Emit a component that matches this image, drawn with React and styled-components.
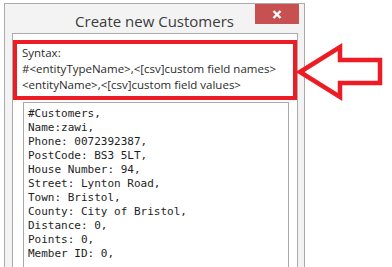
import styled, { createGlobalStyle } from 'styled-components'

const Global = createGlobalStyle`
  html, body { margin: 0; padding: 0; background: #ffffff; }
  body { width: 392px; height: 267px; overflow: hidden; position: relative; }
`

const Page = styled.div`
  position: relative;
  width: 392px;
  height: 267px;
  padding: 3px 0 0 4px;
  box-sizing: border-box;
  overflow: hidden;
`

const Window = styled.div`
  width: 301px;
  height: 264px;
  box-sizing: border-box;
  border: 1px solid #ababab;
  border-bottom: none;
  background: #f3f3f3;
  display: flex;
  flex-direction: column;
`

const TitleBar = styled.div`
  height: 29px;
  flex: none;
  display: grid;
  grid-template-columns: 1fr auto 1fr;
  align-items: start;
`

const Title = styled.div`
  grid-column: 2;
  font-family: "Segoe UI", "Open Sans", "Noto Sans", sans-serif;
  font-size: 15px;
  line-height: 20px;
  padding-top: 7px;
  color: #3c3c3c;
  white-space: nowrap;
`

const CloseButton = styled.div`
  grid-column: 3;
  justify-self: end;
  margin-right: 5px;
  width: 44px;
  height: 20px;
  background: #c75050;
  display: grid;
  place-items: center;
`

const Panel = styled.div`
  flex: 1;
  min-height: 0;
  margin: 0 6px 0 7px;
  border: 1px solid #ababab;
  border-bottom: none;
  background: #ffffff;
  padding-top: 6px;
  display: flex;
  flex-direction: column;
`

const Syntax = styled.div`
  border: 4px solid #ed1c24;
  padding: 1px 0 3px 5px;
  font-family: "Segoe UI", "Open Sans", "Noto Sans", sans-serif;
  font-size: 11.5px;
  line-height: 16px;
  color: #2b2b2b;
  white-space: nowrap;
  overflow: hidden;
`

const TextBox = styled.div`
  flex: 1;
  min-height: 0;
  margin: 2px 8px 0 10px;
  border: 1px solid #a9a9a9;
  border-bottom: none;
  padding: 4px 4px 0;
  font-family: "DejaVu Sans Mono", "Liberation Mono", monospace;
  font-size: 11px;
  line-height: 14px;
  color: #1e1e1e;
  white-space: pre;
  overflow: hidden;
`

const Arrow = styled.svg`
  position: absolute;
  left: 292px;
  top: 40px;
`

const lines = [
  '#Customers,',
  'Name:zawi,',
  'Phone: 0072392387,',
  'PostCode: BS3 5LT,',
  'House Number: 94,',
  'Street: Lynton Road,',
  'Town: Bristol,',
  'County: City of Bristol,',
  'Distance: 0,',
  'Points: 0,',
  'Member ID: 0,',
]

export default function App() {
  return (
    <Page>
      <Global />
      <Window>
        <TitleBar>
          <Title>Create new Customers</Title>
          <CloseButton>
            <svg width="10" height="9" viewBox="0 0 10 9">
              <path d="M1.5 1 L8.5 8 M8.5 1 L1.5 8" stroke="#fff" strokeWidth="2.4" />
            </svg>
          </CloseButton>
        </TitleBar>
        <Panel>
          <Syntax>
            Syntax:
            <br />
            {'#<entityTypeName>,<[csv]custom field names>'}
            <br />
            {'<entityName>,<[csv]custom field values>'}
          </Syntax>
          <TextBox>{lines.join('\n')}</TextBox>
        </Panel>
      </Window>
      <Arrow width="96" height="64" viewBox="292 40 96 64">
        <polygon
          points="300,72 340,47 340,60 380,60 380,83 340,83 340,97"
          fill="none"
          stroke="#ed1c24"
          strokeWidth="4.5"
          strokeLinejoin="miter"
        />
      </Arrow>
    </Page>
  )
}
